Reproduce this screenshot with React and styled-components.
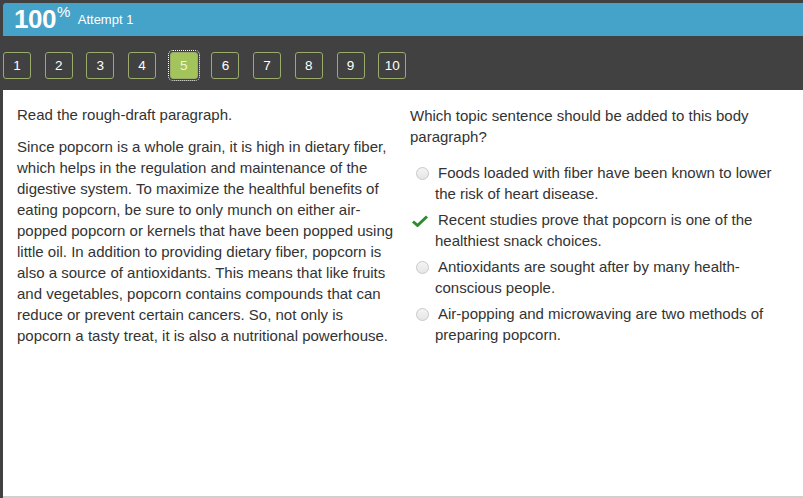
import React from 'react'
import styled, { createGlobalStyle } from 'styled-components'

const Global = createGlobalStyle`
  html, body { margin: 0; padding: 0; background: #414141; }
  body { font-family: "Liberation Sans", Arial, sans-serif; }
`

const Page = styled.div`
  width: 803px;
  height: 498px;
  background: #414141;
  padding: 3px 0 0 3px;
  box-sizing: border-box;
  display: flex;
  flex-direction: column;
  overflow: hidden;
`

const Header = styled.div`
  height: 33px;
  background: #45a2c8;
  border-radius: 3px 0 0 0;
  display: flex;
  align-items: center;
  padding-left: 11px;
  color: #fff;
`

const Score = styled.span`
  font-size: 26px;
  font-weight: bold;
  letter-spacing: -0.5px;
`

const Percent = styled.sup`
  font-size: 15px;
  font-weight: normal;
  position: relative;
  top: -1px;
  margin-left: 1px;
`

const Attempt = styled.span`
  font-size: 13px;
  margin-left: 8px;
`

const Nav = styled.div`
  display: flex;
  gap: 13.7px;
  padding: 16px 0 11px 0;
`

const NumButton = styled.div`
  width: 26px;
  height: 25px;
  border: 1px solid #9aab6c;
  border-radius: 3px;
  background: ${p => (p.$active ? '#a3c45a' : '#414141')};
  color: ${p => (p.$active ? '#eef6dc' : '#fff')};
  font-size: 13.5px;
  display: flex;
  align-items: center;
  justify-content: center;
  outline: ${p => (p.$active ? '1px dotted #fff' : 'none')};
  outline-offset: 1px;
`

const Panel = styled.div`
  flex: 1;
  background: #fff;
  border-bottom: 2px solid #cfcfcf;
  display: grid;
  grid-template-columns: 393px 1fr;
  color: #333;
  font-size: 15px;
  line-height: 21px;
`

const Column = styled.div`
  padding: ${p => (p.$right ? '15px 12px 0 14px' : '14px 0 0 14px')};
`

const Para = styled.p`
  margin: 0 0 11px;
`

const Options = styled.div`
  display: flex;
  flex-direction: column;
  gap: 5px;
  margin-top: 15px;
`

const Option = styled.div`
  display: flex;
  align-items: flex-start;
`

const Mark = styled.div`
  width: 25px;
  flex: none;
  padding-top: 5px;
  display: flex;
  justify-content: ${p => (p.$check ? 'flex-start' : 'center')};
`

const Radio = styled.span`
  width: 11px;
  height: 11px;
  border-radius: 50%;
  border: 1px solid #c8c8c8;
  background: linear-gradient(#f4f4f4, #e6e6e6);
`

const OptionText = styled.div`
  text-indent: 3px;
`

const Check = () => (
  <svg width="16" height="12" viewBox="0 0 16 12" style={{ marginLeft: 2, marginTop: 1 }}>
    <path d="M1 6.5 L5.5 10.5 L15 1.5" fill="none" stroke="#2e8a2e" strokeWidth="3" strokeLinejoin="round" />
  </svg>
)

const options = [
  'Foods loaded with fiber have been known to lower the risk of heart disease.',
  'Recent studies prove that popcorn is one of the healthiest snack choices.',
  'Antioxidants are sought after by many health-conscious people.',
  'Air-popping and microwaving are two methods of preparing popcorn.',
]

export default function App() {
  return (
    <Page>
      <Global />
      <Header>
        <Score>100<Percent>%</Percent></Score>
        <Attempt>Attempt 1</Attempt>
      </Header>
      <Nav>
        {[1, 2, 3, 4, 5, 6, 7, 8, 9, 10].map(n => (
          <NumButton key={n} $active={n === 5}>{n}</NumButton>
        ))}
      </Nav>
      <Panel>
        <Column>
          <Para>Read the rough-draft paragraph.</Para>
          <Para>
            Since popcorn is a whole grain, it is high in dietary fiber, which helps in the regulation and
            maintenance of the digestive system. To maximize the healthful benefits of eating popcorn, be sure
            to only munch on either air-popped popcorn or kernels that have been popped using little oil. In
            addition to providing dietary fiber, popcorn is also a source of antioxidants. This means that like
            fruits and vegetables, popcorn contains compounds that can reduce or prevent certain cancers. So,
            not only is popcorn a tasty treat, it is also a nutritional powerhouse.
          </Para>
        </Column>
        <Column $right>
          <div>Which topic sentence should be added to this body paragraph?</div>
          <Options>
            {options.map((t, i) => (
              <Option key={i}>
                <Mark $check={i === 1}>{i === 1 ? <Check /> : <Radio />}</Mark>
                <OptionText>{t}</OptionText>
              </Option>
            ))}
          </Options>
        </Column>
      </Panel>
    </Page>
  )
}
